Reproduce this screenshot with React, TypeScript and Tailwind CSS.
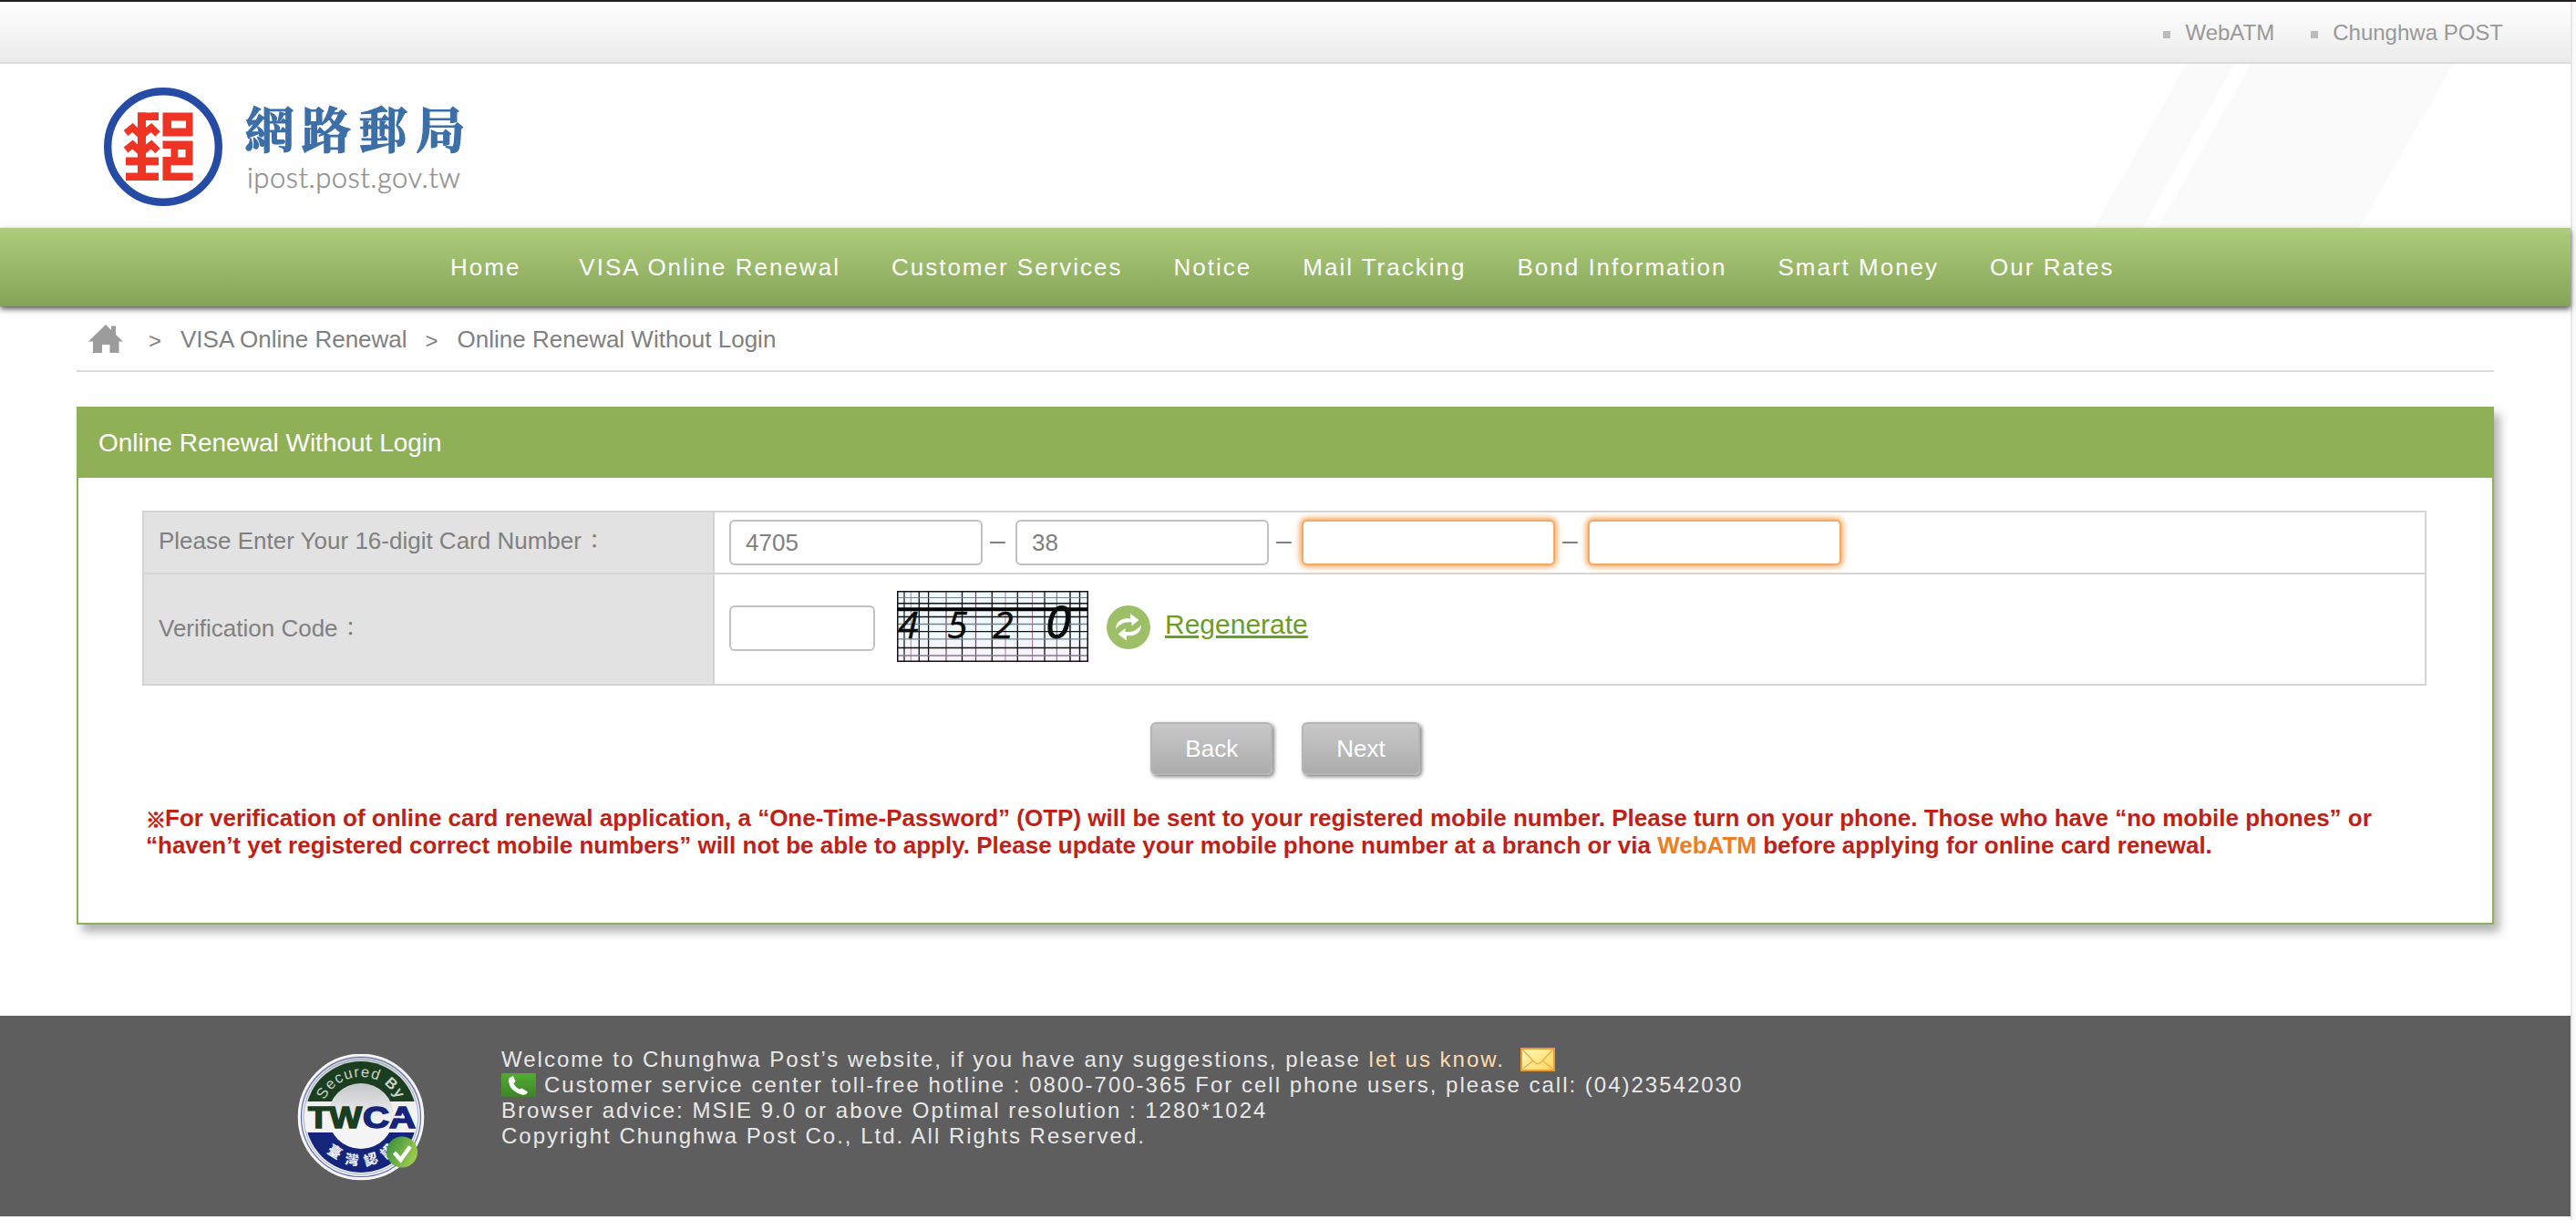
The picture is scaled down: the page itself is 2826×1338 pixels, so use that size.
import React from "react";

const navItems = [
  "Home",
  "VISA Online Renewal",
  "Customer Services",
  "Notice",
  "Mail Tracking",
  "Bond Information",
  "Smart Money",
  "Our Rates",
];

function PostLogo() {
  return (
    <svg width="440" height="150" viewBox="0 0 440 150" className="block">
      <circle cx="67" cy="67" r="60.8" fill="#fff" stroke="#264ba5" strokeWidth="8.4" />
      <g fill="#ee3424">
        <rect x="39" y="29.5" width="9" height="74" />
        <rect x="39" y="29.5" width="23" height="8.5" />
        <rect x="54" y="29.5" width="8" height="8.5" />
        <rect x="26" y="78.5" width="36" height="8.8" />
        <rect x="26" y="95.5" width="36" height="8.5" />
        <path fillRule="evenodd" d="M66.500 29.500H99.500V55.500H66.500ZM76 38.500V46.500H92V38.500Z" />
        <path fillRule="evenodd" d="M66.500 60.500H99.500V87.300H75.500V95.500H99.500V104H66.500V78H75.500V69H66.500ZM83 70V78.500H91.500V70Z" />
      </g>
      <g fill="none" stroke="#ee3424" strokeWidth="7.5">
        <path d="M26 52L33.500 46L43 55" />
        <path d="M44 54L54 46L61 53" />
        <path d="M26 70.500L33.500 64.500L43 73.500" />
        <path d="M44 72.500L54 64.500L61 71.500" />
      </g>
      <text x="156.500" y="68.500" fontSize="54" letterSpacing="8.5" fontWeight="700" fill="#3c6ea8" stroke="#3c6ea8" strokeWidth="1.2" className="font-['Noto_Serif_CJK_TC','Noto_Sans_CJK_TC',serif]">
        網路郵局
      </text>
      <text x="159" y="112" fontSize="31" fontWeight="300" fill="#8e8e8e" stroke="#8e8e8e" strokeWidth="0.4" textLength="234" className="font-['Lato',sans-serif]">
        ipost.post.gov.tw
      </text>
    </svg>
  );
}

function HomeIcon() {
  return (
    <svg width="38" height="32" viewBox="0 0 38 32" className="block">
      <path d="M19 0L25 6V1.500H30V11L38 18.500H33.500V31H23.500V22H15V31H5V18.500H0Z" fill="#9c9c9c" />
    </svg>
  );
}

const vLines: [number, string, number][] = [
  [8, "#111", 1.2], [15.3, "#b47fa8", 1], [24.300, "#111", 1.3], [34.600, "#111", 1.3],
  [54, "#6d4b6b", 1.2], [71.500, "#111", 1.3], [86.500, "#6d4b6b", 1.2], [104.300, "#111", 1.3],
  [119, "#b47fa8", 1], [132.300, "#111", 1.3], [148.500, "#a673a0", 1], [162, "#111", 1.3],
  [175.300, "#6f6f78", 1], [190, "#111", 1.4], [200.500, "#111", 1.4],
];
const hLines: [number, string, number][] = [
  [7.500, "#6f8490", 1.2], [13.800, "#111", 1.5], [20.200, "#000", 4], [28.500, "#111", 1.4],
  [36.500, "#6f8490", 1.3], [44.600, "#111", 1.4], [52.800, "#6f8490", 1.3], [62.500, "#111", 1.4],
  [71, "#7c7c88", 1.3],
];

function Captcha() {
  return (
    <svg width="210" height="78" viewBox="0 0 210 78" className="block">
      <defs>
        <linearGradient id="cap" x1="0" y1="0" x2="0" y2="1">
          <stop offset="0" stopColor="#eef8fb" />
          <stop offset="0.6" stopColor="#f0f9fc" />
          <stop offset="1" stopColor="#fbf0fa" />
        </linearGradient>
      </defs>
      <rect width="210" height="78" fill="url(#cap)" />
      {vLines.map(([x, c, w]) => (
        <line key={x} x1={x} x2={x} y1="0" y2="78" stroke={c} strokeWidth={w} />
      ))}
      {hLines.map(([y, c, w]) => (
        <line key={y} x1="0" x2="210" y1={y} y2={y} stroke={c} strokeWidth={w} />
      ))}
      <rect x="0.75" y="0.75" width="208.500" height="76.500" fill="none" stroke="#111" strokeWidth="1.5" />
      <g fill="#0c0c0c" stroke="#0c0c0c" strokeWidth="0.5" fontStyle="italic" className="font-['Open_Sans',sans-serif]">
        <text x="1" y="51.500" fontSize="41">4</text>
        <text x="55" y="51.500" fontSize="41">5</text>
        <text x="105" y="51.500" fontSize="41">2</text>
        <text x="163" y="52" fontSize="50" strokeWidth="1">0</text>
      </g>
    </svg>
  );
}

function RefreshIcon() {
  return (
    <svg width="48" height="48" viewBox="0 0 48 48" className="block">
      <circle cx="24" cy="24" r="24" fill="#9dbf67" />
      <path d="M10 26C10 17 18 13 26 14.500V9L35.500 16L27.500 22.500V18.500C19 17.500 14 21 10 26Z" fill="#fff" />
      <path d="M10 26C10 17 18 13 26 14.500V9L35.500 16L27.500 22.500V18.500C19 17.500 14 21 10 26Z" fill="#fff" transform="rotate(180 24 23.700)" />
    </svg>
  );
}

function TwcaSeal() {
  return (
    <svg width="140" height="140" viewBox="0 0 140 140" className="block">
      <defs>
        <linearGradient id="silver" x1="0" y1="0" x2="0" y2="1">
          <stop offset="0" stopColor="#c4c6c8" />
          <stop offset="0.6" stopColor="#f4f4f4" />
          <stop offset="1" stopColor="#f4f4f4" />
        </linearGradient>
        <linearGradient id="check" x1="0" y1="0" x2="1" y2="0.5">
          <stop offset="0" stopColor="#2f8a3c" />
          <stop offset="1" stopColor="#9bcb4b" />
        </linearGradient>
        <linearGradient id="rim" x1="0" y1="0" x2="0" y2="1">
          <stop offset="0" stopColor="#c9cbcd" />
          <stop offset="0.45" stopColor="#f3f3f3" />
          <stop offset="1" stopColor="#f3f3f3" />
        </linearGradient>
        <clipPath id="topSeg"><rect x="0" y="0" width="140" height="52" /></clipPath>
        <clipPath id="botSeg"><rect x="0" y="86" width="140" height="54" /></clipPath>
        <path id="arcTop" d="M26 69A44 44 0 0 1 114 69" />
        <path id="arcBot" d="M17 69A53 53 0 0 0 123 69" />
      </defs>
      <circle cx="70" cy="69" r="69" fill="url(#rim)" />
      <circle cx="70" cy="69" r="68" fill="none" stroke="#f6f6f6" strokeWidth="2.500" />
      <circle cx="70" cy="69" r="65.500" fill="none" stroke="#5a68a8" strokeWidth="1.2" />
      <circle cx="70" cy="69" r="63" fill="none" stroke="#8d97c0" strokeWidth="0.8" />
      <circle cx="70" cy="69" r="61" fill="#1b3d20" clipPath="url(#topSeg)" />
      <circle cx="70" cy="69" r="61" fill="#15257c" clipPath="url(#botSeg)" />
      <circle cx="70" cy="68" r="36" fill="url(#silver)" />
      <text fontSize="16.500" fill="#c9d2c6" textAnchor="middle" letterSpacing="1.300" className="font-['Liberation_Sans',Arial,sans-serif]">
        <textPath href="#arcTop" startOffset="50%">Secured <tspan fontWeight="700">By</tspan></textPath>
      </text>
      <text fontSize="15" fontWeight="900" fill="#eef0f8" letterSpacing="8" className="font-['Noto_Sans_CJK_TC',sans-serif]">
        <textPath href="#arcBot" startOffset="42">臺灣認證</textPath>
      </text>
      <g fontSize="34" fontWeight="700" strokeWidth="1.6" className="font-['Liberation_Sans',Arial,sans-serif]">
        <text x="12" y="80.500" fill="#1b3d20" stroke="#1b3d20" textLength="59" lengthAdjust="spacingAndGlyphs">TW</text>
        <text x="72" y="80.500" fill="#15257c" stroke="#15257c" textLength="58" lengthAdjust="spacingAndGlyphs">CA</text>
      </g>
      <path d="M86 69H118" stroke="#f0f0f0" strokeWidth="2.5" />
      <circle cx="115" cy="107.500" r="17" fill="url(#check)" />
      <path d="M106.500 108L113.500 116L124 101.500" fill="none" stroke="#fff" strokeWidth="4.600" />
    </svg>
  );
}

function MailIcon() {
  return (
    <svg width="38" height="26" viewBox="0 0 38 26" className="block shrink-0">
      <defs>
        <linearGradient id="mail" x1="0" y1="0" x2="1" y2="1">
          <stop offset="0" stopColor="#fff6b8" />
          <stop offset="1" stopColor="#fcd95a" />
        </linearGradient>
      </defs>
      <rect width="38" height="26" fill="#ee9a34" />
      <rect x="2" y="2" width="34" height="22" rx="1.500" fill="url(#mail)" />
      <path d="M3 3L16 16.500Q19 19 22 16.500L35 3M3 23L14 14M35 23L24 14" fill="none" stroke="#eeae4c" strokeWidth="1.500" />
    </svg>
  );
}

function PhoneIcon() {
  return (
    <svg width="38" height="26" viewBox="0 0 38 26" className="block shrink-0">
      <defs>
        <linearGradient id="phone" x1="0" y1="0" x2="0" y2="1">
          <stop offset="0" stopColor="#55ab34" />
          <stop offset="1" stopColor="#3c8526" />
        </linearGradient>
      </defs>
      <rect width="38" height="26" rx="2" fill="url(#phone)" />
      <path d="M9 5L13 3L15.500 9L13.500 11.500Q15.500 15.500 19.500 17.500L22.500 16.500L29 20.500Q27 24.500 22.500 23.500Q9 19.500 8 8.500Q8 6 9 5Z" fill="#fff" />
    </svg>
  );
}

const fieldBase = "h-[50px] rounded-[6px] border-2 bg-white px-4 text-[26px] leading-[46px] text-[#7f7f7f] outline-none";

function Dash() {
  return <span className="w-9 pl-[8px] text-[30px] leading-[46px] h-[50px] text-[#808080]">–</span>;
}

function ActionButton({ label }: { label: string }) {
  return (
    <button className="h-[58px] rounded-[6px] border-2 border-[#b5b5b5] bg-linear-to-b from-[#c8c8c8] to-[#acacac] px-[36px] text-[26px] leading-none text-white shadow-[2px_2px_4px_rgba(0,0,0,0.5)]">
      {label}
    </button>
  );
}

export default function App() {
  return (
    <div className="flex h-[1338px] w-[2826px] flex-col overflow-hidden border-t-2 border-[#231f20] bg-[#fafafa] font-['Liberation_Sans',Arial,'Noto_Sans_CJK_TC',sans-serif] text-[26px] text-[#808080]">
      <div className="flex h-[1336px] w-[2822px] flex-col border-r-2 border-[#e6e6e6] bg-[#fefefe]">
        <div className="flex h-[68px] shrink-0 items-center justify-end border-b-2 border-[#dcdcdc] bg-linear-to-b from-white to-[#ebebeb] pt-px pr-[74px] text-2xl text-[#999]">
          <a className="flex items-center">
            <span className="mt-1 mr-4 size-2 bg-[#bbb]" />
            WebATM
          </a>
          <a className="ml-[40px] flex items-center">
            <span className="mt-1 mr-4 size-2 bg-[#bbb]" />
            Chunghwa POST
          </a>
        </div>

        <header className="relative h-[180px] shrink-0">
          <svg width="400" height="180" viewBox="0 0 400 180" className="absolute top-0 left-[2294px]">
            <path d="M105 0H157L56 180H3ZM176 0H397L294 180H73Z" fill="#fafafa" />
          </svg>
          <div className="pt-[24px] pl-[112px]">
            <PostLogo />
          </div>
        </header>

        <nav className="relative flex h-[86px] shrink-0 items-center gap-[56px] bg-linear-to-b from-[#aecd7b] to-[#86a457] pl-[494px] tracking-[2px] text-white shadow-[0_3px_6px_rgba(0,0,0,0.65)]">
          {navItems.map((item) => (
            <a key={item} className="whitespace-nowrap first:mr-[8px]">
              {item}
            </a>
          ))}
        </nav>

        <main className="flex flex-col px-[84px]">
          <div className="flex h-[72px] items-center border-b-2 border-[#d9d9d9] pt-[2px] pl-[13px]">
            <HomeIcon />
            <span className="mt-1 ml-[28px] w-[35px] text-2xl">&gt;</span>
            <span>VISA Online Renewal</span>
            <span className="mt-1 ml-[20px] w-[35px] text-2xl">&gt;</span>
            <span>Online Renewal Without Login</span>
          </div>

          <section className="mt-[38px] flex h-[568px] flex-col border-2 border-[#90b058] bg-white shadow-[6px_8px_10px_rgba(0,0,0,0.3)]">
            <h1 className="flex h-[76px] items-center bg-[#90b058] pl-[22px] text-[28px] text-white">
              Online Renewal Without Login
            </h1>
            <div className="mt-[36px] ml-[70px] flex w-[2506px] flex-col border-2 border-[#d4d4d4]">
              <div className="flex h-[68px] border-b-2 border-[#d4d4d4]">
                <div className="flex w-[626px] items-center border-r-2 border-[#d4d4d4] bg-[#e2e2e2] pb-1 pl-4">
                  Please Enter Your 16-digit Card Number<span className="pl-[3px] text-[22px]">：</span>
                </div>
                <div className="flex items-center pl-4">
                  <input readOnly value="4705" className={`${fieldBase} w-[278px] border-[#c0c0c0]`} />
                  <Dash />
                  <input readOnly value="38" className={`${fieldBase} w-[278px] border-[#c0c0c0]`} />
                  <Dash />
                  <input readOnly value="" className={`${fieldBase} w-[278px] border-[#f5a962] shadow-[0_0_6px_2px_#f5a55a]`} />
                  <Dash />
                  <input readOnly value="" className={`${fieldBase} w-[278px] border-[#f5a962] shadow-[0_0_6px_2px_#f5a55a]`} />
                </div>
              </div>
              <div className="flex h-[120px]">
                <div className="flex w-[626px] items-center border-r-2 border-[#d4d4d4] bg-[#e2e2e2] pb-[2px] pl-4">
                  Verification Code<span className="pl-[3px] text-[22px]">：</span>
                </div>
                <div className="flex items-start pt-[18px] pl-4">
                  <input readOnly value="" className={`${fieldBase} mt-[16px] w-[160px] border-[#c0c0c0]`} />
                  <div className="ml-[24px]">
                    <Captcha />
                  </div>
                  <div className="mt-[16px] ml-[20px]">
                    <RefreshIcon />
                  </div>
                  <a className="mt-[20px] ml-[16px] text-[30px] leading-[34px] text-[#6b9c27] underline">Regenerate</a>
                </div>
              </div>
            </div>
            <div className="mt-[40px] flex justify-center gap-[32px]">
              <ActionButton label="Back" />
              <ActionButton label="Next" />
            </div>
            <p className="mt-[32px] ml-[74px] font-bold leading-[30px] text-[#bf2117]">
              <span className="inline-block h-[30px] w-[21px] align-top font-['Noto_Sans_CJK_TC'] text-[22px] leading-[30px] [-webkit-text-stroke:1px_#bf2117]">※</span>
              For verification of online card renewal application, a “One-Time-Password” (OTP) will be sent to your registered mobile number. Please turn on your phone. Those who have “no mobile phones” or
              <br />
              “haven’t yet registered correct mobile numbers” will not be able to apply. Please update your mobile phone number at a branch or via <a className="text-[#ee7d22]">WebATM</a> before applying for online card renewal.
            </p>
          </section>
        </main>

        <footer className="mt-[100px] flex h-[220px] shrink-0 bg-[#5e5e5e] pl-[326px]">
          <div className="mt-[42px]">
            <TwcaSeal />
          </div>
          <div className="mt-[34px] ml-[84px] text-2xl leading-7 tracking-[2px] text-[#e8e8e8]">
            <div className="flex h-7 items-center">
              <span className="whitespace-pre">Welcome to Chunghwa Post’s website, if you have any suggestions, please </span>
              <a className="mr-[17px] text-[#ffdcae]">let us know.</a>
              <MailIcon />
            </div>
            <div className="flex h-7 items-center">
              <PhoneIcon />
              <span className="ml-[9px]">Customer service center toll-free hotline : 0800-700-365 For cell phone users, please call: (04)23542030</span>
            </div>
            <div className="h-7">Browser advice: MSIE 9.0 or above Optimal resolution : 1280*1024</div>
            <div className="h-7">Copyright Chunghwa Post Co., Ltd. All Rights Reserved.</div>
          </div>
        </footer>
      </div>
    </div>
  );
}
